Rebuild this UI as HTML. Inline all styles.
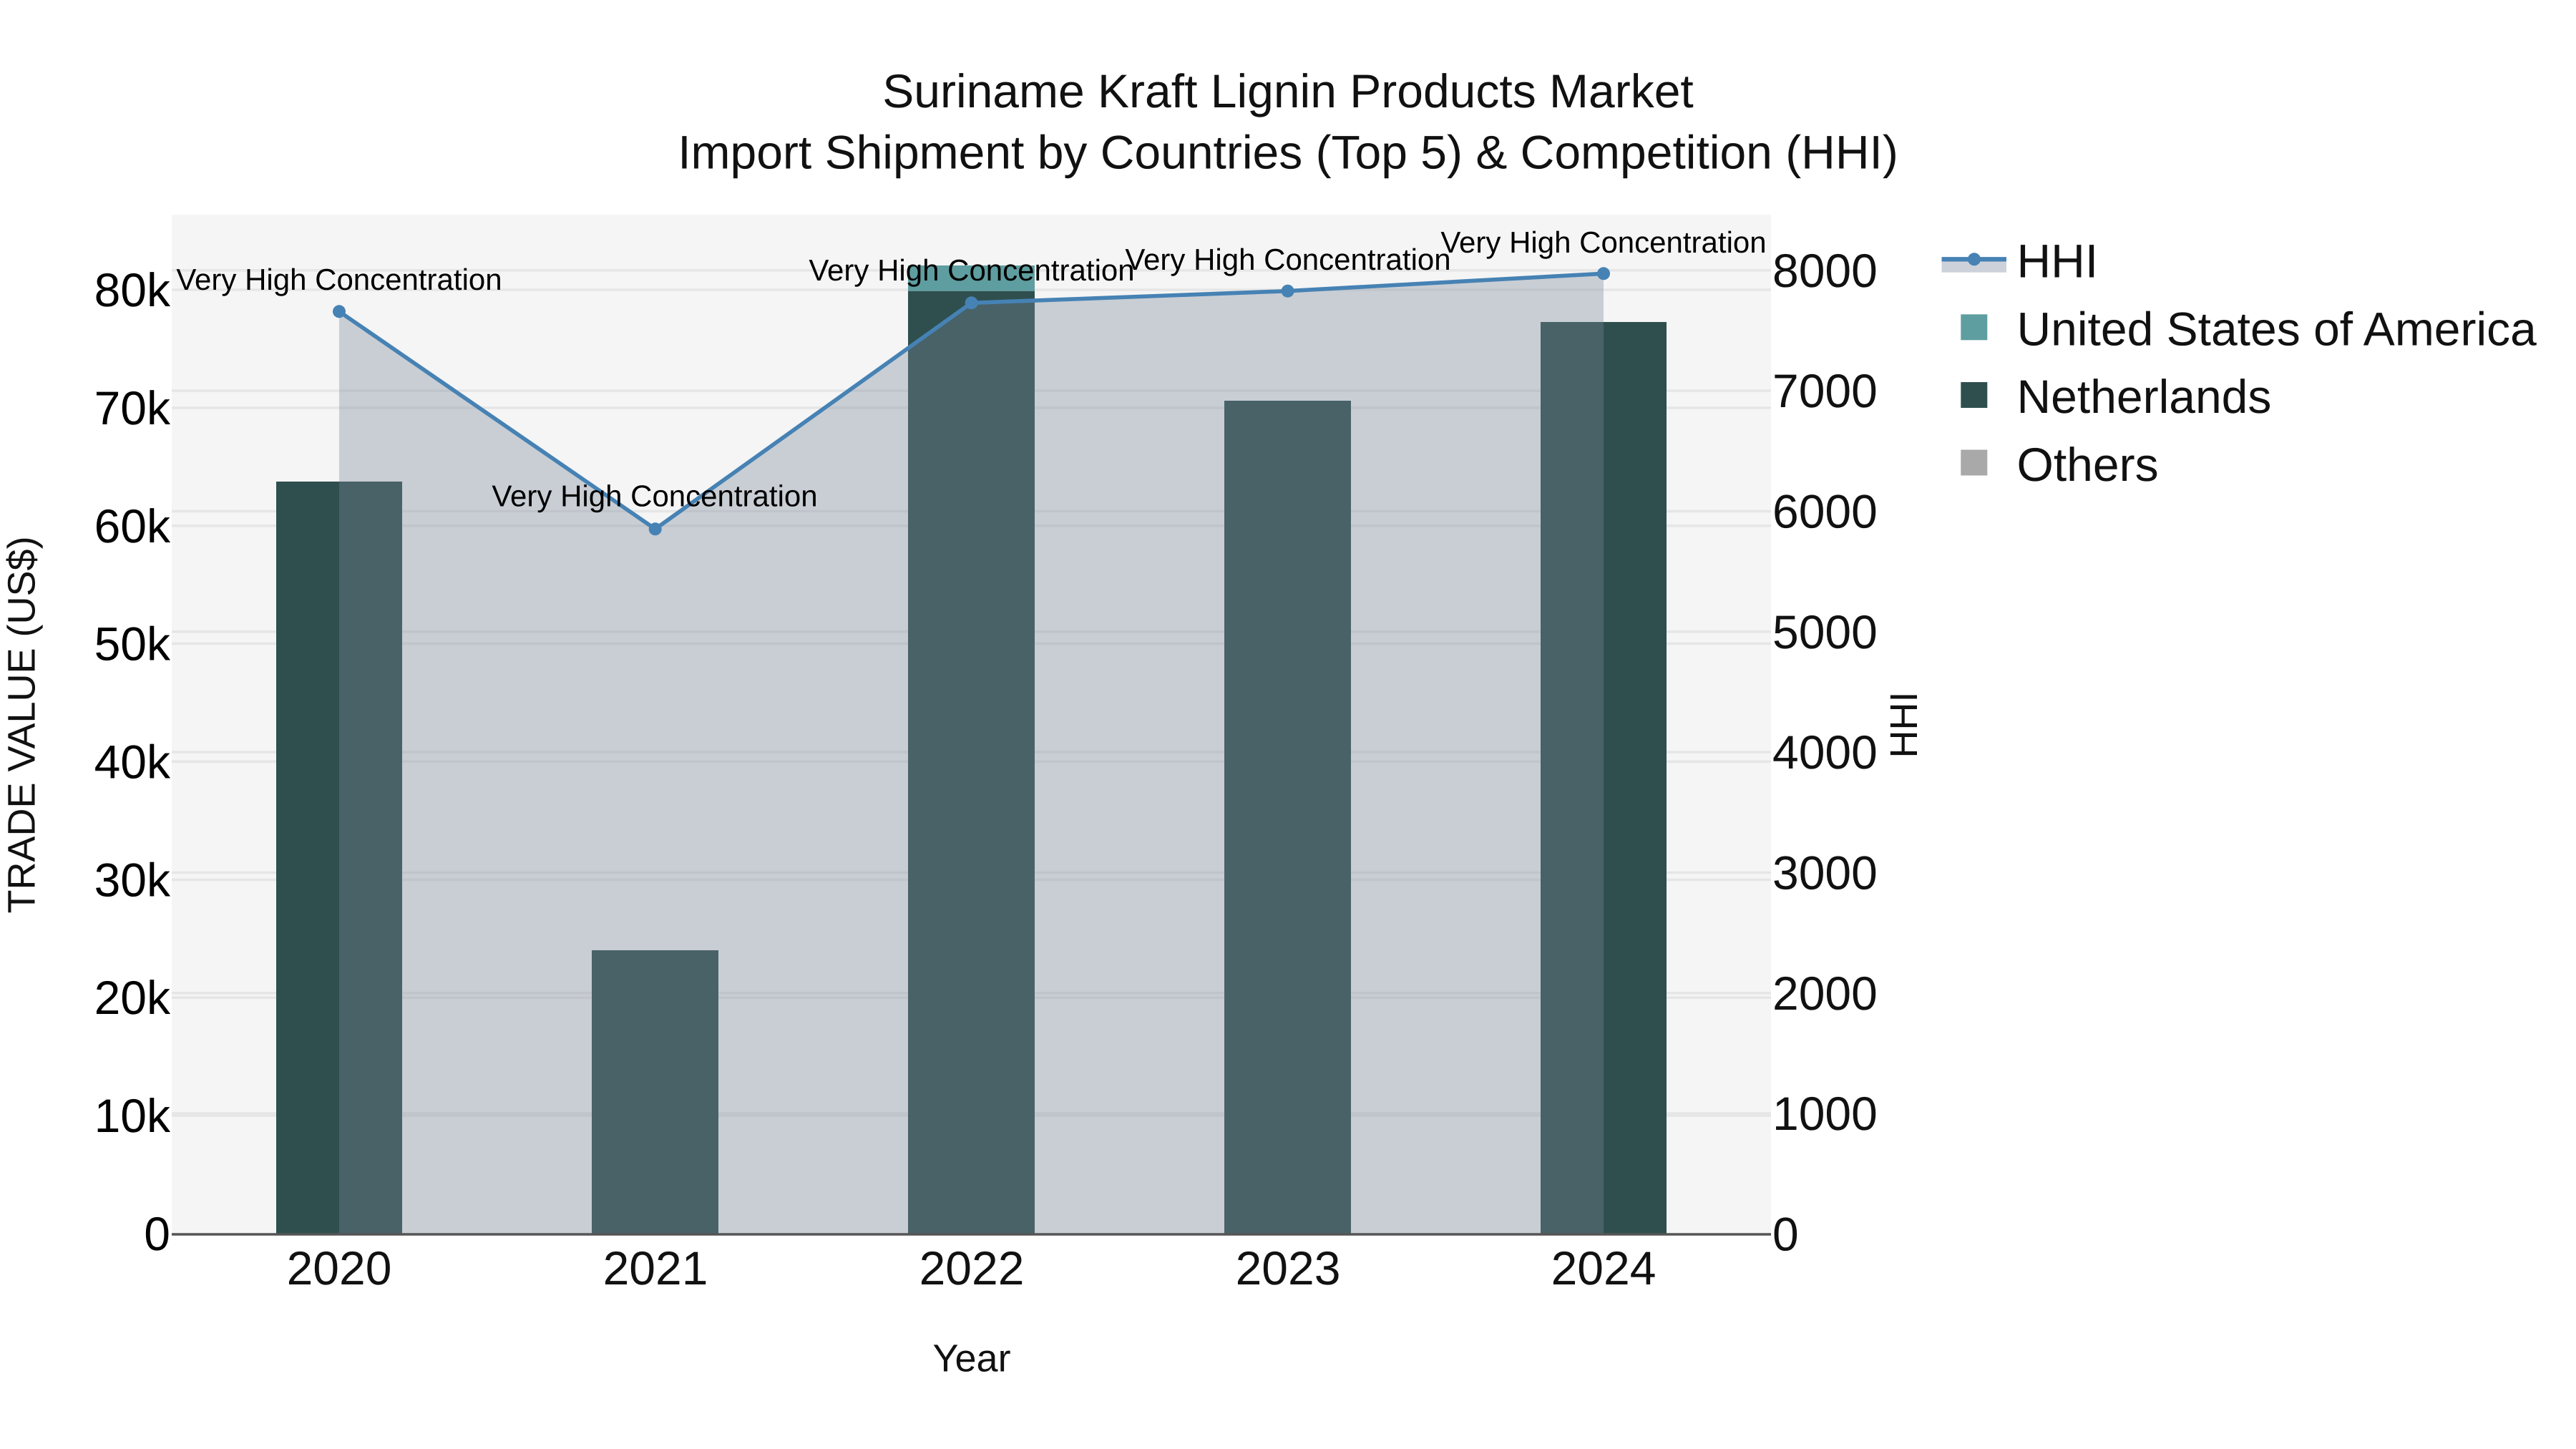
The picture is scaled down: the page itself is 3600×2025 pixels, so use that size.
<!DOCTYPE html>
<html lang="en">
<head>
<meta charset="utf-8">
<title>Suriname Kraft Lignin Products Market</title>
<style>
html,body{margin:0;padding:0;background:#fff;}
svg{display:block;}
text{font-family:"Liberation Sans",Arial,sans-serif;text-rendering:geometricPrecision;}
</style>
</head>
<body>
<svg xmlns="http://www.w3.org/2000/svg" width="3600" height="2025" viewBox="0 0 3600 2025">
<rect width="3600" height="2025" fill="#fff"/>
<rect x="240" y="300" width="2235" height="1425" fill="#f5f5f5"/>

<!-- gridlines -->
<g stroke="#e6e6e6" stroke-width="3.6" fill="none">
<path d="M240 405H2475M240 569.9H2475M240 734.8H2475M240 899.4H2475M240 1064.3H2475M240 1229.4H2475M240 1394.2H2475M240 1559.1H2475"/>
<path d="M240 377.8H2475M240 546.1H2475M240 714.5H2475M240 882.8H2475M240 1051.1H2475M240 1219.5H2475M240 1387.8H2475M240 1556.1H2475"/>
</g>

<!-- bars -->
<g fill="#2f4f4f">
<rect x="386" y="673" width="176" height="1051"/>
<rect x="827" y="1328" width="177" height="396"/>
<rect x="1269" y="406.7" width="177" height="1317.3"/>
<rect x="1711" y="560" width="177" height="1164"/>
<rect x="2153" y="450" width="176" height="1274"/>
</g>
<rect x="1269" y="371" width="177" height="35.7" fill="#5f9ea0"/>

<!-- area -->
<path d="M474 435.3L915.7 739.3L1357.6 423.3L1799.6 406.7L2241 382.3V1724H474Z" fill="rgb(121,134,153)" fill-opacity="0.35"/>

<!-- axis line -->
<path d="M240 1725H2475" stroke="#555" stroke-width="3.6" fill="none"/>

<!-- HHI line -->
<path d="M474 435.3L915.7 739.3L1357.6 423.3L1799.6 406.7L2241 382.3" fill="none" stroke="#4682b4" stroke-width="5.6" stroke-linejoin="round"/>
<g fill="#4682b4">
<circle cx="474" cy="435.3" r="9"/>
<circle cx="915.7" cy="739.3" r="9"/>
<circle cx="1357.6" cy="423.3" r="9"/>
<circle cx="1799.6" cy="406.7" r="9"/>
<circle cx="2241" cy="382.3" r="9"/>
</g>

<!-- annotations -->
<g font-size="42" fill="#000" text-anchor="middle">
<text x="474" y="405">Very High Concentration</text>
<text x="915" y="707.5">Very High Concentration</text>
<text x="1358" y="392">Very High Concentration</text>
<text x="1800" y="377">Very High Concentration</text>
<text x="2241" y="353">Very High Concentration</text>
</g>

<!-- title -->
<g font-size="66" fill="#111" text-anchor="middle">
<text x="1800" y="150">Suriname Kraft Lignin Products Market</text>
<text x="1800" y="235.7">Import Shipment by Countries (Top 5) &amp; Competition (HHI)</text>
</g>

<!-- left ticks -->
<g font-size="66" fill="#000" text-anchor="end">
<text x="238" y="428">80k</text>
<text x="238" y="593">70k</text>
<text x="238" y="757.8">60k</text>
<text x="238" y="922.4">50k</text>
<text x="238" y="1087.3">40k</text>
<text x="238" y="1252.4">30k</text>
<text x="238" y="1417.2">20k</text>
<text x="238" y="1582.1">10k</text>
<text x="238" y="1747">0</text>
</g>

<!-- right ticks -->
<g font-size="66" fill="#111" text-anchor="start">
<text x="2477" y="400.8">8000</text>
<text x="2477" y="569.1">7000</text>
<text x="2477" y="737.5">6000</text>
<text x="2477" y="905.8">5000</text>
<text x="2477" y="1074.1">4000</text>
<text x="2477" y="1242.5">3000</text>
<text x="2477" y="1410.8">2000</text>
<text x="2477" y="1579.1">1000</text>
<text x="2477" y="1747.5">0</text>
</g>

<!-- x ticks -->
<g font-size="66" fill="#111" text-anchor="middle">
<text x="474" y="1795">2020</text>
<text x="916" y="1795">2021</text>
<text x="1358" y="1795">2022</text>
<text x="1800" y="1795">2023</text>
<text x="2241" y="1795">2024</text>
</g>

<!-- axis titles -->
<text x="1358" y="1916.7" font-size="54" fill="#111" text-anchor="middle">Year</text>
<text transform="translate(48.3 1013) rotate(-90)" font-size="54" fill="#111" text-anchor="middle">TRADE VALUE (US$)</text>
<text transform="translate(2679 1013) rotate(-90)" font-size="54" fill="#111" text-anchor="middle">HHI</text>

<!-- legend -->
<rect x="2713.5" y="362" width="90.5" height="18.7" fill="#cdd2da"/>
<path d="M2713.5 362.3H2804" stroke="#4682b4" stroke-width="6.4" fill="none"/>
<circle cx="2759" cy="362.3" r="9" fill="#4682b4"/>
<rect x="2740.3" y="439.3" width="37" height="36" fill="#5f9ea0"/>
<rect x="2740.3" y="534" width="37" height="36" fill="#2f4f4f"/>
<rect x="2740.3" y="628.5" width="37" height="36" fill="#a9a9a9"/>
<g font-size="66" fill="#111">
<text x="2818.5" y="387.3">HHI</text>
<text x="2818.5" y="482.3">United States of America</text>
<text x="2818.5" y="577.2">Netherlands</text>
<text x="2818.5" y="672">Others</text>
</g>
</svg>
</body>
</html>
